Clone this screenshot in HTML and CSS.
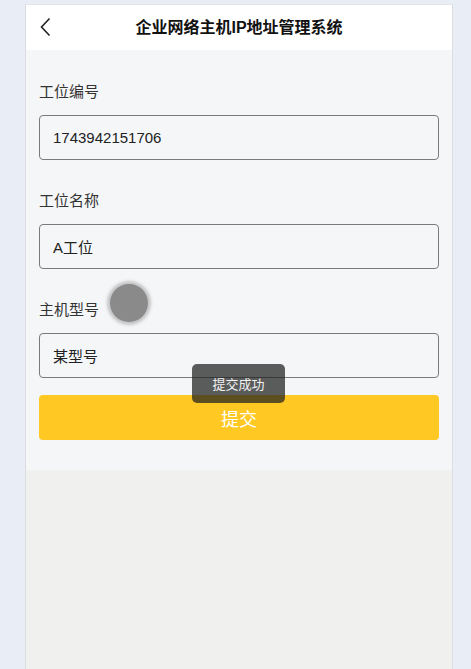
FILE: index.html
```html
<!DOCTYPE html>
<html lang="zh">
<head>
<meta charset="utf-8">
<title>企业网络主机IP地址管理系统</title>
<link rel="stylesheet" href="styles.css">
</head>
<body>
<div class="frame">
  <header class="header">
    <svg class="back" width="14" height="20" viewBox="0 0 14 20"><polyline points="10.5,1.5 2.5,10 10.5,18.5" fill="none" stroke="#222" stroke-width="1.6"/></svg>
    <h1 class="title">企业网络主机IP地址管理系统</h1>
  </header>
  <main class="form">
    <div class="field">
      <label class="label">工位编号</label>
      <div class="input">1743942151706</div>
    </div>
    <div class="field">
      <label class="label">工位名称</label>
      <div class="input">A工位</div>
    </div>
    <div class="field last">
      <label class="label">主机型号</label>
      <div class="input">某型号</div>
    </div>
    <button class="submit">提交</button>
  </main>
  <div class="rest"></div>
  <div class="touch"></div>
  <div class="toast">提交成功</div>
</div>
</body>
</html>
```
FILE: styles.css
```css
html, body {
  margin: 0;
  padding: 0;
  background: #e9edf6;
  font-family: "Liberation Sans", "Noto Sans CJK SC", sans-serif;
}
.frame {
  position: relative;
  margin: 4px 0 0 25px;
  width: 426px;
  height: 665px;
  border-left: 1px solid #dcdde0;
  border-right: 1px solid #dcdde0;
  border-top: 1px solid #e2e4e8;
  display: flex;
  flex-direction: column;
  background: #f0f0ef;
  overflow: hidden;
}
.header {
  position: relative;
  height: 45px;
  background: #ffffff;
  display: flex;
  align-items: center;
  justify-content: center;
}
.back {
  position: absolute;
  left: 13px;
  top: 12px;
}
.title {
  margin: 0;
  font-size: 16px;
  font-weight: bold;
  color: #111;
  line-height: 22px;
}
.form {
  background: #f5f6f8;
  padding: 31px 13px 30px;
  display: flex;
  flex-direction: column;
}
.field {
  display: flex;
  flex-direction: column;
  margin-bottom: 30px;
}
.field.last {
  margin-bottom: 17px;
}
.label {
  font-size: 15px;
  line-height: 22px;
  color: #333;
  margin-bottom: 12px;
}
.input {
  box-sizing: border-box;
  height: 45px;
  border: 1px solid #7a7a7a;
  border-radius: 4px;
  padding: 0 13px;
  display: flex;
  align-items: center;
  font-size: 15px;
  color: #222;
  background: #f5f6f8;
}
.submit {
  height: 45px;
  border: none;
  border-radius: 4px;
  background: #ffc822;
  color: #fff;
  font-family: inherit;
  font-size: 18px;
  padding: 0;
}
.rest {
  flex: 1;
  background: #f0f0ef;
}
.touch {
  position: absolute;
  left: 84px;
  top: 279px;
  width: 38px;
  height: 38px;
  border-radius: 50%;
  background: #8a8a8a;
  box-shadow: 0 0 3px 3px rgba(150,150,150,0.5);
}
.toast {
  position: absolute;
  left: 166px;
  top: 359px;
  width: 93px;
  height: 39px;
  border-radius: 5px;
  background: rgba(30,30,30,0.72);
  color: #f2f2f2;
  font-size: 13px;
  display: flex;
  align-items: center;
  justify-content: center;
}
```
